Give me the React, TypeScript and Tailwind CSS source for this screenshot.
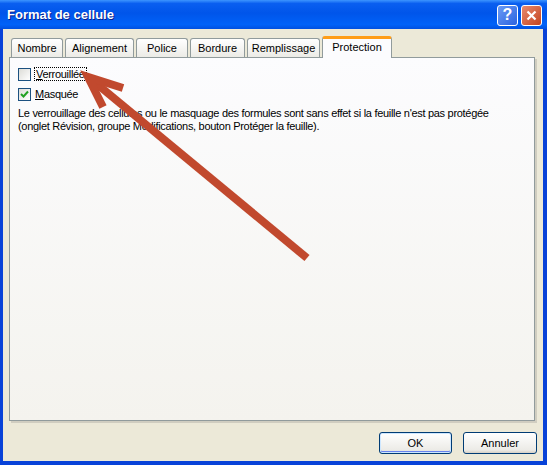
import React from "react";

const tabs = ["Nombre", "Alignement", "Police", "Bordure", "Remplissage"];
const tabWidths = ["w-[52px]", "w-[69px]", "w-[52px]", "w-[55px]", "w-[73px]"];

function XpCheckbox({ checked }: { checked?: boolean }) {
  return (
    <div className="w-[13px] h-[13px] border border-[#1c5180] bg-[linear-gradient(135deg,#dcdcd7,#ffffff)] flex items-center justify-center">
      {checked && (
        <svg width="9" height="9" viewBox="0 0 9 9">
          <path d="M1 4 L3.5 6.5 L8 1.5" fill="none" stroke="#21a121" strokeWidth="2" />
        </svg>
      )}
    </div>
  );
}

export default function App() {
  return (
    <div
      className="relative w-[547px] h-[465px] flex flex-col bg-[#0842d8] overflow-hidden"
      style={{ fontFamily: '"Liberation Sans", Arial, sans-serif' }}
    >
      {/* title bar */}
      <div className="h-[29px] shrink-0 flex items-center pl-[7px] pr-[5px] bg-[linear-gradient(to_bottom,#3d95ff_0%,#0a5ff0_12%,#0055ea_45%,#0062f8_85%,#0050e0_100%)]">
        <span className="text-white font-bold text-[13px] [text-shadow:1px_1px_0_#0a1e8a] flex-1">
          Format de cellule
        </span>
        <div className="flex gap-[3px] mt-[1px]">
          <div className="w-[21px] h-[21px] rounded-[3px] border border-white bg-[linear-gradient(135deg,#6b9cf5,#2a63e0)] flex items-center justify-center text-white font-bold text-[16px] leading-none">
            ?
          </div>
          <div className="w-[21px] h-[21px] rounded-[3px] border border-white bg-[linear-gradient(135deg,#e88a6e,#c4441f)] flex items-center justify-center">
            <svg width="11" height="11" viewBox="0 0 11 11">
              <path d="M1.5 1.5 L9.5 9.5 M9.5 1.5 L1.5 9.5" stroke="white" strokeWidth="2.2" />
            </svg>
          </div>
        </div>
      </div>

      {/* body */}
      <div className="flex-1 ml-[3px] mr-[4px] mb-[4px] bg-[#ece9d8] flex flex-col pt-[7px] px-[6px]">
        <div className="flex items-end h-[21px] pl-[2px] gap-[2px] text-[11px] text-black">
          {tabs.map((t, i) => (
            <div
              key={t}
              className={`${tabWidths[i]} h-[19px] border border-b-0 border-[#919b9c] rounded-t-[3px] bg-[linear-gradient(to_bottom,#ffffff,#ecebe6)] flex items-center justify-center`}
            >
              {t}
            </div>
          ))}
          <div className="relative z-10 w-[70px] h-[22px] -mb-px border border-b-0 border-[#919b9c] border-t-[#ff9d17] border-t-[3px] rounded-t-[3px] bg-[#fcfcfe] flex items-center justify-center pb-[2px]">
            Protection
          </div>
        </div>

        <div className="h-[364px] border border-[#919b9c] shadow-[2px_2px_0_#d0cdc0] bg-[linear-gradient(to_bottom,#fcfcfe,#f4f3ee)] px-[8px] pt-[9px] text-[11px] tracking-[-0.3px] text-black mr-[2px]">
          <div className="flex items-center gap-[3px] h-[14px]">
            <XpCheckbox />
            <span className="border border-dotted border-black px-[1px] leading-[12px]">
              <span className="underline">V</span>errouillée
            </span>
          </div>
          <div className="flex items-center gap-[4px] h-[14px] mt-[6px]">
            <XpCheckbox checked />
            <span>
              <span className="underline">M</span>asquée
            </span>
          </div>
          <p className="mt-[6px] leading-[13px]">
            Le verrouillage des cellules ou le masquage des formules sont sans effet si la feuille n'est pas protégée
            <br />
            (onglet Révision, groupe Modifications, bouton Protéger la feuille).
          </p>
        </div>

        <div className="flex justify-end gap-[11px] mt-[11px] text-[11px] text-black">
          <button className="w-[73px] h-[22px] rounded-[3px] border border-[#003c74] bg-[linear-gradient(to_bottom,#ffffff,#ecebe6_85%,#d6d0c5)] shadow-[inset_0_0_0_1px_#cee7ff,inset_0_-1px_0_1px_#6982ee] flex items-center justify-center">
            OK
          </button>
          <button className="w-[74px] h-[22px] rounded-[3px] border border-[#003c74] bg-[linear-gradient(to_bottom,#ffffff,#ecebe6_85%,#d6d0c5)] flex items-center justify-center">
            Annuler
          </button>
        </div>
      </div>

      {/* annotation arrow */}
      <svg className="absolute left-0 top-0 pointer-events-none" width="547" height="465">
        <g stroke="#c1492e" strokeWidth="8" fill="none" strokeLinecap="butt">
          <path d="M307 258 L92 80" />
          <path d="M123 88 L88 77 L103 107" strokeLinejoin="miter" />
        </g>
      </svg>
    </div>
  );
}
